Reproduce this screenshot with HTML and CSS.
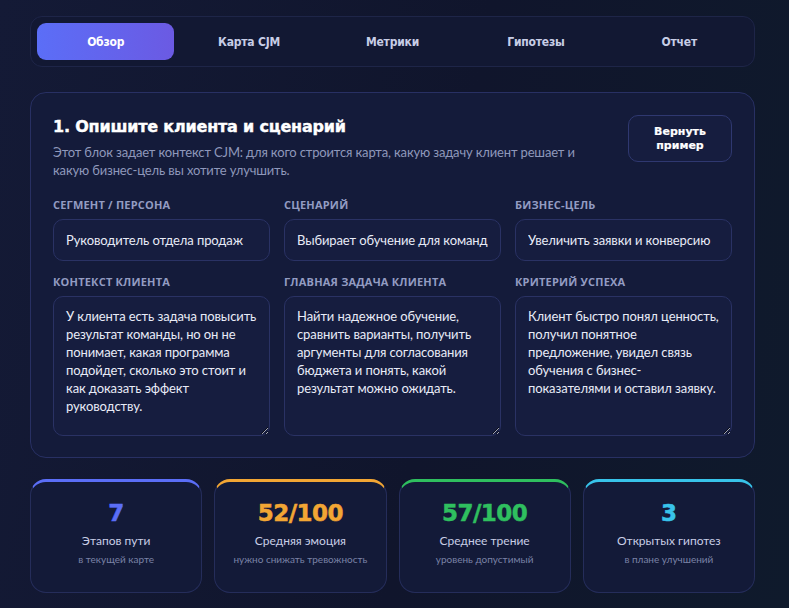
FILE: index.html
```html
<!DOCTYPE html>
<html lang="ru">
<head>
  <meta charset="UTF-8">
  <title>CJM — обзор</title>
  <link rel="stylesheet" href="styles.css">
</head>
<body>
  <!-- вкладки -->
  <nav class="tabs">
    <button class="tab active">Обзор</button>
    <button class="tab">Карта CJM</button>
    <button class="tab">Метрики</button>
    <button class="tab">Гипотезы</button>
    <button class="tab">Отчет</button>
  </nav>

  <!-- блок контекста -->
  <section class="card">
    <div class="card-head">
      <div>
        <h2>1. Опишите клиента и сценарий</h2>
        <p class="lead">Этот блок задает контекст CJM: для кого строится карта, какую задачу клиент решает и какую бизнес-цель вы хотите улучшить.</p>
      </div>
      <button class="btn-reset">Вернуть пример</button>
    </div>

    <div class="fields">
      <label class="field">
        <span class="field-label">Сегмент / персона</span>
        <input type="text" value="Руководитель отдела продаж">
      </label>
      <label class="field">
        <span class="field-label">Сценарий</span>
        <input type="text" value="Выбирает обучение для команд">
      </label>
      <label class="field">
        <span class="field-label">Бизнес-цель</span>
        <input type="text" value="Увеличить заявки и конверсию">
      </label>
      <label class="field">
        <span class="field-label">Контекст клиента</span>
        <textarea>У клиента есть задача повысить результат команды, но он не понимает, какая программа подойдет, сколько это стоит и как доказать эффект руководству.</textarea>
      </label>
      <label class="field">
        <span class="field-label">Главная задача клиента</span>
        <textarea>Найти надежное обучение, сравнить варианты, получить аргументы для согласования бюджета и понять, какой результат можно ожидать.</textarea>
      </label>
      <label class="field">
        <span class="field-label">Критерий успеха</span>
        <textarea>Клиент быстро понял ценность, получил понятное предложение, увидел связь обучения с бизнес-показателями и оставил заявку.</textarea>
      </label>
    </div>
  </section>

  <!-- метрики -->
  <div class="stats">
    <div class="stat blue">
      <div class="stat-value">7</div>
      <div class="stat-label">Этапов пути</div>
      <div class="stat-sub">в текущей карте</div>
    </div>
    <div class="stat orange">
      <div class="stat-value">52/100</div>
      <div class="stat-label">Средняя эмоция</div>
      <div class="stat-sub">нужно снижать тревожность</div>
    </div>
    <div class="stat green">
      <div class="stat-value">57/100</div>
      <div class="stat-label">Среднее трение</div>
      <div class="stat-sub">уровень допустимый</div>
    </div>
    <div class="stat cyan">
      <div class="stat-value">3</div>
      <div class="stat-label">Открытых гипотез</div>
      <div class="stat-sub">в плане улучшений</div>
    </div>
  </div>
</body>
</html>
```

FILE: styles.css
```css
* {
  box-sizing: border-box;
  margin: 0;
  padding: 0;
}

html, body {
  height: 100%;
}

body {
  font-family: Lato, Roboto, sans-serif;
  color: #e6e9f5;
  background: linear-gradient(100deg, #141a36 0%, #10152c 55%, #0f1a2c 100%);
  padding: 16px 34px 0 30px;
  overflow: hidden;
}

/* вкладки */
.tabs {
  display: grid;
  grid-template-columns: repeat(5, 1fr);
  gap: 6px;
  padding: 6px;
  background: #121833;
  border: 1px solid #1e2548;
  border-radius: 12px;
  height: 51px;
}

.tab {
  background: none;
  border: none;
  border-radius: 9px;
  color: #c7cde6;
  font-family: "DejaVu Sans Condensed", "Open Sans", sans-serif;
  font-weight: bold;
  font-size: 12px;
  letter-spacing: -0.2px;
  cursor: pointer;
}

.tab.active {
  background: linear-gradient(90deg, #5b6ef7, #6b5ae3);
  color: #fff;
}

/* карточка */
.card {
  margin-top: 25px;
  background: #141b3a;
  border: 1px solid #283063;
  border-radius: 16px;
  padding: 22px 22px 21px;
}

.card-head {
  display: flex;
  justify-content: space-between;
  align-items: flex-start;
  gap: 30px;
}

h2 {
  font-family: "DejaVu Sans", sans-serif;
  font-weight: 900;
  font-size: 16px;
  color: #fff;
  letter-spacing: -0.2px;
  line-height: 24px;
  -webkit-text-stroke: 0.4px #fff;
}

.lead {
  margin-top: 4px;
  font-size: 13px;
  letter-spacing: -0.15px;
  line-height: 18px;
  color: #8f98bb;
  max-width: 535px;
}

.btn-reset {
  width: 104px;
  height: 47px;
  flex-shrink: 0;
  background: #161d3f;
  border: 1px solid #2f3870;
  border-radius: 10px;
  color: #fff;
  font-family: "DejaVu Sans", sans-serif;
  font-weight: bold;
  font-size: 11px;
  line-height: 14px;
  padding: 0 16px;
  -webkit-text-stroke: 0.2px #fff;
  cursor: pointer;
}

.fields {
  margin-top: 19px;
  display: grid;
  grid-template-columns: repeat(3, 1fr);
  column-gap: 14px;
  row-gap: 14px;
}

.field {
  display: flex;
  flex-direction: column;
  gap: 7px;
}

.field-label {
  font-family: "Open Sans", sans-serif;
  font-size: 11px;
  font-weight: bold;
  text-transform: uppercase;
  color: #939cc2;
  letter-spacing: 0.2px;
  line-height: 14px;
}

input, textarea {
  font-family: Lato, Roboto, sans-serif;
  font-size: 13px;
  letter-spacing: -0.1px;
  color: #e8ebf7;
  background: #161d3f;
  border: 1px solid #2a3264;
  border-radius: 10px;
  outline: none;
  width: 100%;
}

input {
  height: 42px;
  padding: 0 12px;
}

textarea {
  height: 140px;
  padding: 10px 9px 10px 12px;
  line-height: 18px;
  resize: vertical;
}

/* метрики */
.stats {
  margin-top: 21px;
  display: grid;
  grid-template-columns: repeat(4, 1fr);
  gap: 12px;
}

.stat {
  height: 114px;
  background: #131a38;
  border: 1px solid #252d5a;
  border-top: 3px solid;
  border-radius: 16px;
  text-align: center;
  padding-top: 17px;
}

.stat.blue { border-top-color: #5b6ef7; }
.stat.orange { border-top-color: #f2a634; }
.stat.green { border-top-color: #2fbf5f; }
.stat.cyan { border-top-color: #38c3ea; }

.stat-value {
  font-family: "DejaVu Sans", sans-serif;
  font-weight: 900;
  font-size: 23px;
  line-height: 28px;
  letter-spacing: -0.5px;
}

.blue .stat-value { color: #5b6ef7; -webkit-text-stroke: 0.5px #5b6ef7; }
.orange .stat-value { color: #f2a634; -webkit-text-stroke: 0.5px #f2a634; }
.green .stat-value { color: #2fbf5f; -webkit-text-stroke: 0.5px #2fbf5f; }
.cyan .stat-value { color: #38c3ea; -webkit-text-stroke: 0.5px #38c3ea; }

.stat-label {
  margin-top: 6px;
  font-size: 12px;
  color: #c9cee6;
  line-height: 16px;
}

.stat-sub {
  margin-top: 3px;
  font-size: 10px;
  color: #7a82a6;
  line-height: 14px;
}
```
